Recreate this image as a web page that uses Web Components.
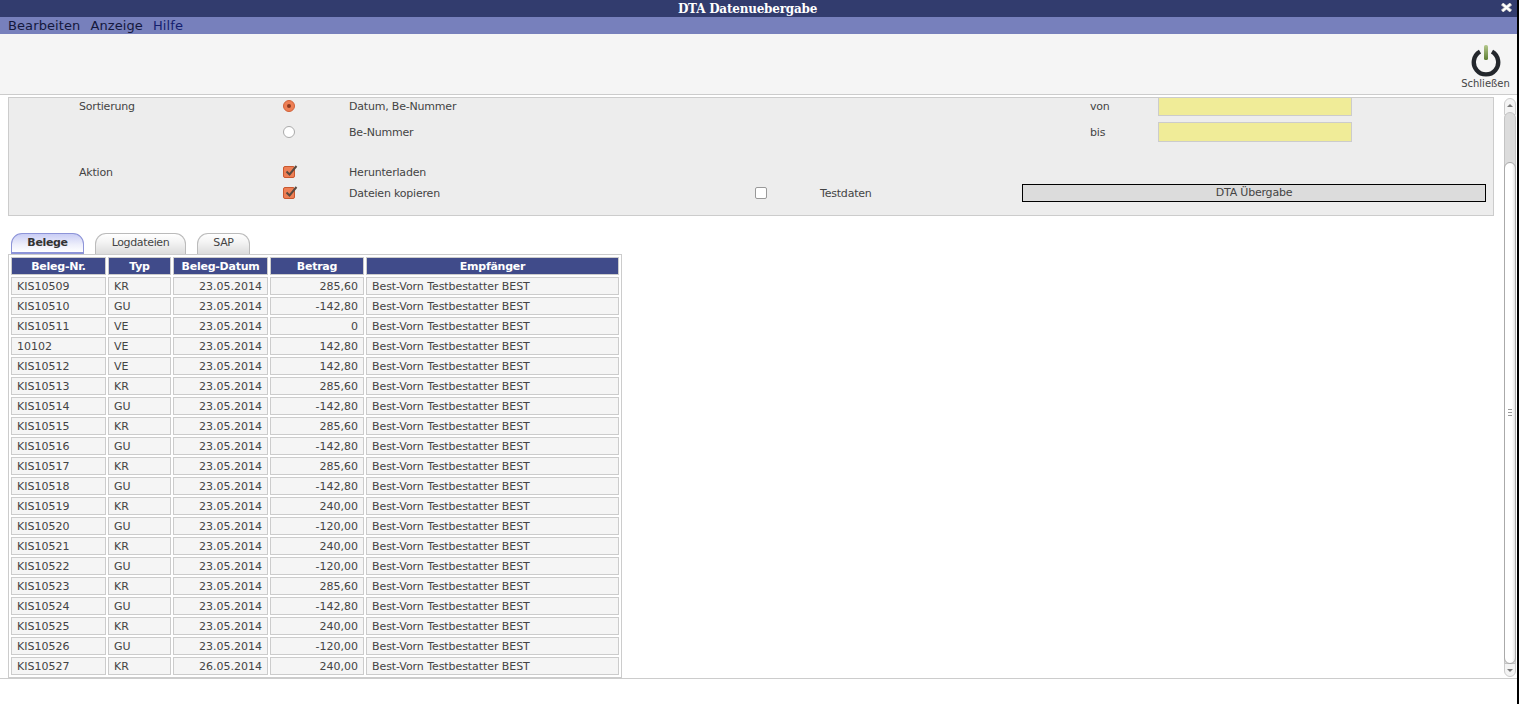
<!DOCTYPE html>
<html lang="de"><head><meta charset="utf-8"><title>DTA</title>
<style>
html,body{margin:0;height:100%;background:#000;overflow:hidden}
body{font:11px "DejaVu Sans",sans-serif;color:#444}
</style></head><body>
<dta-app></dta-app>
<script>
const css=(s)=>`<style>${s}</style>`;
class Base extends HTMLElement{
  constructor(){super();this.attachShadow({mode:'open'});}
}
class TitleBar extends Base{connectedCallback(){this.shadowRoot.innerHTML=css(`
:host{display:flex;height:17px;background:#323c6e;color:#fff;align-items:center;justify-content:center;position:relative;padding-right:22px;font:bold 12px "DejaVu Serif",serif;letter-spacing:-.22px}
svg{position:absolute;right:5px;top:3px}
`)+`<span>DTA Datenuebergabe</span><svg width="11" height="9" viewBox="0 0 11 9"><path d="M1 .8L10 8.2M10 .8L1 8.2" stroke="#bbb" stroke-width="3.4"/><path d="M1.5 1L9.5 8M9.5 1L1.5 8" stroke="#fff" stroke-width="2.2"/></svg>`}}
class MenuBar extends Base{connectedCallback(){this.shadowRoot.innerHTML=css(`
:host{display:flex;height:17px;background:#7780bc;padding-left:8px;gap:10px;font:13px/18px "DejaVu Sans",sans-serif;color:#14183c;letter-spacing:.1px}
span:last-child{color:#14206e}
`)+`<span>Bearbeiten</span><span>Anzeige</span><span>Hilfe</span>`}}
class ToolBar extends Base{connectedCallback(){this.shadowRoot.innerHTML=css(`
:host{display:flex;height:60px;background:#f5f5f5;border-bottom:1px solid #ccc;justify-content:flex-end;box-sizing:content-box}
div{display:flex;flex-direction:column;align-items:center;width:57px;margin-right:3px;padding-top:10px;font-size:10px;color:#444;line-height:12px}
svg{display:block;margin-bottom:1px}
`)+`<div><svg width="30" height="33" viewBox="0 0 30 33"><defs><linearGradient id="g" x1="0" y1="0" x2="0" y2="1"><stop offset="0" stop-color="#b5c98d"/><stop offset="1" stop-color="#5c7d33"/></linearGradient></defs><path d="M9 7.6A12.2 12.2 0 1 0 21 7.6" fill="none" stroke="#23272c" stroke-width="4.4"/><rect x="13" y="1" width="4" height="15" rx="1.6" fill="url(#g)"/></svg><span>Schließen</span></div>`}}
class DtaRadio extends Base{connectedCallback(){const on=this.hasAttribute('checked');this.shadowRoot.innerHTML=css(`
:host{display:inline-block;width:12px;height:12px;border-radius:50%;box-sizing:border-box;border:1px solid ${on?'#d0623a':'#aaa'};background:${on?'#ee7f55':'#fff'};position:relative}
i{position:absolute;left:3px;top:3px;width:4px;height:4px;border-radius:50%;background:#8a3a20}
`)+(on?'<i></i>':'')}}
class DtaCheck extends Base{connectedCallback(){const on=this.hasAttribute('checked');this.shadowRoot.innerHTML=css(`
:host{display:inline-block;width:12px;height:12px;border-radius:2px;box-sizing:border-box;border:1px solid ${on?'#c9582f':'#999'};background:${on?'#ee7f55':'#fff'};position:relative}
svg{position:absolute;left:0;top:-3px;overflow:visible}
`)+(on?'<svg width="15" height="14" viewBox="0 0 15 14"><path d="M2.5 7.5L5.5 10.5L12.5 2" fill="none" stroke="#5a4a40" stroke-width="2"/></svg>':'')}}
customElements.define('title-bar',TitleBar);
customElements.define('menu-bar',MenuBar);
customElements.define('tool-bar',ToolBar);
customElements.define('dta-radio',DtaRadio);
customElements.define('dta-check',DtaCheck);
class FormPanel extends Base{connectedCallback(){this.shadowRoot.innerHTML=css(`
:host{display:block;margin:0 0 0 8px;width:1486px;height:119px;box-sizing:border-box;background:#ededed;border:1px solid #ccc;overflow:hidden;letter-spacing:-.2px}
.row{display:flex;align-items:center}
.r1{height:20px;margin-top:-2px}.r2{height:20px;margin-top:6px}.r3{height:14px;margin-top:23px}.r4{height:18px;margin-top:5px}
.a{width:70px;flex:none}.l{width:204px;flex:none}.c{width:66px;flex:none;display:flex}.t{width:406px;flex:none}.t2{width:65px;flex:none;display:flex}.v{width:202px;flex:none}.m{width:68px;flex:none}
.in{width:194px;height:20px;background:#f0ec98;border:1px solid #ccc;box-sizing:border-box}
.btn{width:464px;height:18px;box-sizing:border-box;background:#dcdcdc;border:1px solid #000;text-align:center;line-height:16px}
`)+`
<div class="row r1"><span class="a"></span><span class="l">Sortierung</span><span class="c"><dta-radio checked></dta-radio></span><span class="t" style="width:741px">Datum, Be-Nummer</span><span class="m">von</span><span class="in"></span></div>
<div class="row r2"><span class="a"></span><span class="l"></span><span class="c"><dta-radio></dta-radio></span><span class="t" style="width:741px">Be-Nummer</span><span class="m">bis</span><span class="in"></span></div>
<div class="row r3"><span class="a"></span><span class="l">Aktion</span><span class="c"><dta-check checked></dta-check></span><span>Herunterladen</span></div>
<div class="row r4"><span class="a"></span><span class="l"></span><span class="c"><dta-check checked></dta-check></span><span class="t">Dateien kopieren</span><span class="t2"><dta-check></dta-check></span><span class="v">Testdaten</span><span class="btn">DTA Übergabe</span></div>`}}
customElements.define('form-panel',FormPanel);
class TabStrip extends Base{connectedCallback(){this.shadowRoot.innerHTML=css(`
:host{display:flex;margin:17px 0 0 11px;height:21px;gap:11px;align-items:flex-end;letter-spacing:-.35px}
div{height:21px;box-sizing:border-box;border:1px solid #bbb;border-bottom:none;border-radius:11px 11px 0 0;background:linear-gradient(#fff 0,#f4f4f4 40%,#dcdcdc 100%);text-align:center;line-height:17px;color:#444}
.on{border-color:#8d94d8;border-bottom:2px solid #8d94d8;background:linear-gradient(#c9cdf5 0,#eeeffb 60%,#fff 100%);font-weight:bold;color:#333}
`)+`<div class="on" style="width:73px">Belege</div><div style="width:91px">Logdateien</div><div style="width:53px">SAP</div>`}}
customElements.define('tab-strip',TabStrip);
const rows=`KIS10509 KR 285,60
KIS10510 GU -142,80
KIS10511 VE 0
10102 VE 142,80
KIS10512 VE 142,80
KIS10513 KR 285,60
KIS10514 GU -142,80
KIS10515 KR 285,60
KIS10516 GU -142,80
KIS10517 KR 285,60
KIS10518 GU -142,80
KIS10519 KR 240,00
KIS10520 GU -120,00
KIS10521 KR 240,00
KIS10522 GU -120,00
KIS10523 KR 285,60
KIS10524 GU -142,80
KIS10525 KR 240,00
KIS10526 GU -120,00
KIS10527 KR 240,00`.split('\n').map(l=>l.split(' '));
class BelegTable extends Base{connectedCallback(){
const body=rows.map((r,i)=>`<tr><td>${r[0]}</td><td>${r[1]}</td><td class="r">${i==19?'26':'23'}.05.2014</td><td class="r">${r[2]}</td><td class="e">Best-Vorn Testbestatter BEST</td></tr>`).join('');
this.shadowRoot.innerHTML=css(`
:host{display:block;margin-left:8px;width:614px}
table{border-collapse:separate;border-spacing:2px;background:#fff;border:1px solid #ccc;width:614px;table-layout:fixed;font-size:11px}
th{background:#404b8a;color:#fff;height:18px;padding:2px 0 0;border:1px solid #ccc;font-weight:bold;line-height:13px;box-sizing:border-box;letter-spacing:-.25px;vertical-align:top}
td{background:#f5f5f5;border:1px solid #ccc;height:18px;padding:3px 5px 0;box-sizing:border-box;color:#444;line-height:12px;vertical-align:top}
.r{text-align:right}
.e{letter-spacing:-.07px}
`)+`<table><colgroup><col style="width:95px"><col style="width:63px"><col style="width:95px"><col style="width:94px"><col style="width:253px"></colgroup><thead><tr><th>Beleg-Nr.</th><th>Typ</th><th>Beleg-Datum</th><th>Betrag</th><th>Empfänger</th></tr></thead><tbody>${body}</tbody></table>`}}
customElements.define('beleg-table',BelegTable);
class ScrollTrack extends Base{connectedCallback(){this.shadowRoot.innerHTML=css(`
:host{display:block;position:absolute;right:1px;top:0;bottom:0;width:12px;background:#fff}
.b{position:absolute;left:0;width:12px;height:17px;box-sizing:border-box;border:1px solid #ccc;background:#f4f4f4}
.up{top:1px;border-radius:6px 6px 0 0}.dn{bottom:1px;border-radius:0 0 6px 6px}
.tr{position:absolute;left:0;top:15px;bottom:14px;width:12px;box-sizing:border-box;border:1px solid #c4c4c4;border-radius:6px 6px 0 0;background:#dcdcdc}
.th{position:absolute;left:0;top:65px;bottom:14px;width:12px;box-sizing:border-box;border:1px solid #aaa;border-radius:6px;background:linear-gradient(90deg,#fff 70%,#e4e4e4)}
.ar{position:absolute;left:3px;width:0;height:0;border-left:3px solid transparent;border-right:3px solid transparent}
.au{top:7px;border-bottom:3px solid #777}.ad{bottom:6px;border-top:3px solid #777}
.gr{position:absolute;left:4px;top:312px;width:4px;height:7px;background:repeating-linear-gradient(#999 0 1px,transparent 1px 3px)}
`)+`<div class="b up"></div><div class="b dn"></div><div class="tr"></div><div class="th"></div><i class="ar au"></i><i class="ar ad"></i><i class="gr"></i>`}}
customElements.define('scroll-track',ScrollTrack);
class DtaApp extends Base{connectedCallback(){this.shadowRoot.innerHTML=css(`
:host{display:flex;flex-direction:column;height:704px;width:1517px;position:relative;background:#fff}
.scroll{height:581px;margin-top:2px;border-bottom:1px solid #ccc;position:relative;box-sizing:content-box;overflow:hidden}
`)+`<title-bar></title-bar><menu-bar></menu-bar><tool-bar></tool-bar><div class="scroll"><form-panel></form-panel><tab-strip></tab-strip><beleg-table></beleg-table><scroll-track></scroll-track></div>`}}
customElements.define('dta-app',DtaApp);
</script></body></html>
